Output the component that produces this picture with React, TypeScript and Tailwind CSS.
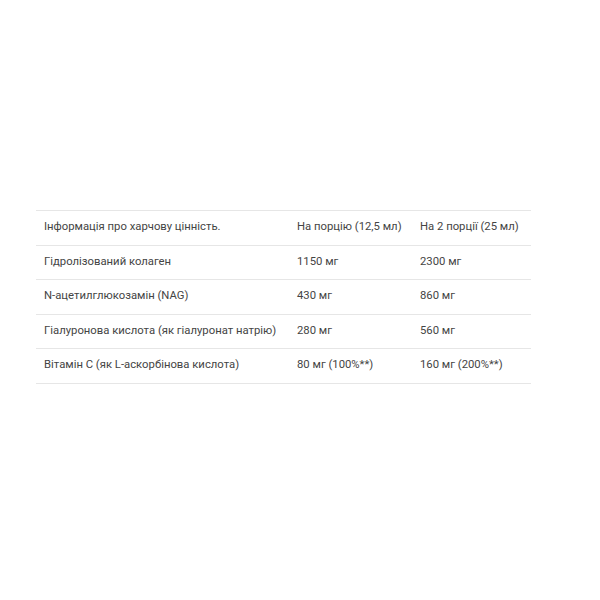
import React from "react";

const rows: [string, string, string][] = [
  ["Інформація про харчову цінність.", "На порцію (12,5 мл)", "На 2 порції (25 мл)"],
  ["Гідролізований колаген", "1150 мг", "2300 мг"],
  ["N-ацетилглюкозамін (NAG)", "430 мг", "860 мг"],
  ["Гіалуронова кислота (як гіалуронат натрію)", "280 мг", "560 мг"],
  ["Вітамін С (як L-аскорбінова кислота)", "80 мг (100%**)", "160 мг (200%**)"],
];

export default function App() {
  return (
    <div className="w-[600px] h-[600px] bg-white pt-[210px] pl-[36px]" style={{ fontFamily: "Roboto, sans-serif" }}>
      <table className="w-[495px] border-collapse text-[11.3px] text-[#444] table-fixed">
        <colgroup>
          <col className="w-[253px]" />
          <col className="w-[123px]" />
          <col className="w-[119px]" />
        </colgroup>
        <tbody>
          {rows.map((r, i) => (
            <tr key={i} className="border-t border-b border-[#e6e6e6] h-[34.5px]">
              {r.map((c, j) => (
                <td key={j} className="px-2 py-0 align-middle whitespace-nowrap">
                  {c}
                </td>
              ))}
            </tr>
          ))}
        </tbody>
      </table>
    </div>
  );
}
